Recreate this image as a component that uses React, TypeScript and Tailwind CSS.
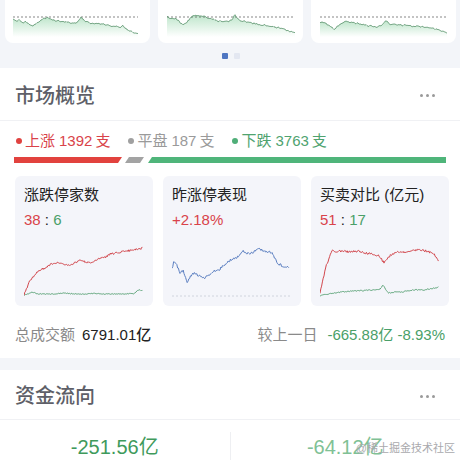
import React from "react";

type P = [number, number];

function rng(seed: number) {
  let s = seed;
  return () => {
    s |= 0;
    s = (s + 0x6d2b79f5) | 0;
    let t = Math.imul(s ^ (s >>> 15), 1 | s);
    t = (t + Math.imul(t ^ (t >>> 7), 61 | t)) ^ t;
    return ((t ^ (t >>> 14)) >>> 0) / 4294967296;
  };
}

function interp(keys: P[], x: number) {
  for (let i = 0; i < keys.length - 1; i++) {
    const [x0, y0] = keys[i];
    const [x1, y1] = keys[i + 1];
    if (x >= x0 && x <= x1) {
      const t = x1 === x0 ? 0 : (x - x0) / (x1 - x0);
      return y0 + (y1 - y0) * t;
    }
  }
  return keys[keys.length - 1][1];
}

function series(keys: P[], step: number, seed: number, amp: number): P[] {
  const r = rng(seed);
  const x0 = keys[0][0];
  const x1 = keys[keys.length - 1][0];
  const pts: P[] = [];
  for (let x = x0; x <= x1 + 0.001; x += step) {
    const y = interp(keys, x) + (r() - 0.5) * amp;
    pts.push([x, y]);
  }
  return pts;
}

function toPath(pts: P[]) {
  return pts.map((p, i) => `${i === 0 ? "M" : "L"}${p[0].toFixed(2)} ${p[1].toFixed(2)}`).join(" ");
}

function scaleKeys(keys: P[], xs: number, xe: number): P[] {
  return keys.map(([t, y]) => [xs + t * (xe - xs), y]);
}

const topCharts: { keys: P[]; xs: number; xe: number; seed: number }[] = [
  {
    keys: [
      [0, 19], [0.03, 21], [0.05, 20], [0.08, 23], [0.1, 21], [0.13, 25], [0.16, 26], [0.2, 22], [0.24, 19], [0.27, 17.5], [0.3, 19], [0.35, 21], [0.42, 22], [0.5, 23.5], [0.53, 20], [0.545, 17], [0.57, 21], [0.62, 23], [0.7, 24], [0.8, 26], [0.86, 27], [0.88, 26], [0.92, 30], [0.97, 33], [1, 33.5],
    ],
    xs: 8, xe: 133, seed: 11,
  },
  {
    keys: [
      [0, 17], [0.03, 19], [0.06, 18], [0.1, 22], [0.13, 25], [0.17, 20], [0.2, 16], [0.24, 15], [0.28, 16], [0.33, 18], [0.4, 21], [0.48, 22], [0.51, 19], [0.53, 15], [0.56, 20], [0.62, 22], [0.7, 24], [0.8, 26], [0.88, 28], [0.95, 31], [1, 33],
    ],
    xs: 9, xe: 137, seed: 23,
  },
  {
    keys: [
      [0, 22], [0.04, 23], [0.08, 26], [0.11, 29], [0.14, 26], [0.18, 23], [0.2, 21], [0.23, 22], [0.28, 23], [0.35, 25], [0.45, 27], [0.5, 24], [0.52, 20.5], [0.55, 24], [0.62, 25], [0.72, 26], [0.82, 27], [0.88, 28], [0.95, 31], [1, 33],
    ],
    xs: 9, xe: 136, seed: 37,
  },
];

function TopCard({ idx }: { idx: number }) {
  const c = topCharts[idx];
  const pts = series(scaleKeys(c.keys, c.xs, c.xe), 1, c.seed, 1.6);
  const line = toPath(pts);
  const area = `${line} L${c.xe} 37 L${c.xs} 37 Z`;
  const gid = `tg${idx}`;
  return (
    <div className="h-[43px] flex-1 rounded-b-lg bg-white">
      <svg width="145" height="43" viewBox="0 0 145 43">
        <defs>
          <linearGradient id={gid} x1="0" y1="0" x2="0" y2="1">
            <stop offset="0" stopColor="#5cbf7c" stopOpacity="0.4" />
            <stop offset="1" stopColor="#5cbf7c" stopOpacity="0" />
          </linearGradient>
        </defs>
        <path d={area} fill={`url(#${gid})`} />
        <line x1={c.xs} y1="17" x2={c.xe} y2="17" stroke="#555" strokeWidth="0.7" strokeDasharray="2 2" />
        <path d={line} fill="none" stroke="#6a9e7b" strokeWidth="0.9" />
      </svg>
    </div>
  );
}

function Dots() {
  return (
    <div className="flex gap-[3px]">
      <span className="h-[3px] w-[3px] rounded-full bg-[#9a9a9a]" />
      <span className="h-[3px] w-[3px] rounded-full bg-[#9a9a9a]" />
      <span className="h-[3px] w-[3px] rounded-full bg-[#9a9a9a]" />
    </div>
  );
}

function LegendItem({ color, dot, label, num }: { color: string; dot: string; label: string; num: string }) {
  return (
    <div className={`flex items-center ${color}`}>
      <span className={`mr-[3px] h-[6px] w-[6px] rounded-full ${dot}`} />
      <span>{label}</span>
      <span className="ml-[4px]">{num}</span>
      <span className="ml-[3px]">支</span>
    </div>
  );
}

const card1Red: P[] = [[0, 63], [3, 56], [5, 50], [7, 48], [10, 44], [12, 41], [16, 38], [21, 36], [26, 33], [30, 31], [36, 31], [44, 33], [51, 31], [56, 28], [62, 30], [66, 31], [71, 28], [76, 26], [82, 25], [86, 22], [93, 21], [101, 19], [110, 18], [119, 16]];
const card1Green: P[] = [[0, 63], [4, 62], [8, 60], [14, 62], [20, 62], [30, 62], [40, 61], [50, 62], [60, 62], [70, 61.5], [80, 62], [100, 62], [110, 61.5], [113, 59], [116, 58], [119, 59]];
const card2Blue: P[] = [[0, 37], [2, 29], [4, 31], [8, 41], [11, 38], [15, 50], [18, 45], [22, 41], [27, 44], [32, 46], [37, 43], [42, 39], [48, 37], [54, 31], [60, 27], [66, 25], [71, 19], [77, 22], [82, 20], [87, 17], [93, 19], [99, 20], [103, 26], [106, 32], [111, 34], [117, 35]];
const card3Red: P[] = [[0, 61], [3, 48], [6, 34], [9, 27], [12, 18], [16, 20], [22, 19], [30, 20], [38, 19], [45, 21], [52, 22], [59, 24], [62, 28], [64, 31], [68, 26], [72, 22], [78, 20], [85, 20], [92, 19], [99, 18], [106, 19], [112, 21], [116, 24], [119, 31]];
const card3Green: P[] = [[0, 64], [8, 62], [22, 60], [35, 59], [52, 58], [60, 57], [63, 53], [66, 58], [68, 61], [75, 60], [82, 60], [92, 58], [102, 58], [110, 57], [119, 55]];

function MiniChart({ lines, dashed }: { lines: { pts: P[]; color: string; seed: number; amp: number }[]; dashed?: number }) {
  return (
    <svg width="120" height="70" viewBox="0 0 120 70" className="mt-[2px]">
      {dashed !== undefined && (
        <line x1="0" y1={dashed} x2="119" y2={dashed} stroke="#c8ccd6" strokeWidth="0.8" strokeDasharray="2 2" />
      )}
      {lines.map((l, i) => (
        <path key={i} d={toPath(series(l.pts, 0.8, l.seed, l.amp))} fill="none" stroke={l.color} strokeWidth="1" strokeLinejoin="round" />
      ))}
    </svg>
  );
}

function StatCard({ title, value, children }: { title: string; value: React.ReactNode; children: React.ReactNode }) {
  return (
    <div className="flex h-[130px] flex-1 flex-col rounded-md bg-[#f4f5fa] px-[9px] pt-[9px]">
      <div className="text-[15px] leading-[20px] text-[#222]">{title}</div>
      <div className="mt-[5px] text-[15px] leading-[20px]">{value}</div>
      {children}
    </div>
  );
}

export default function App() {
  const red = "#d9434a";
  const green = "#4a9f68";
  return (
    <div className="relative h-[460px] w-[460px] overflow-hidden bg-[#f3f5f9] font-['Liberation_Sans','Noto_Sans_CJK_SC',sans-serif]">
      <div className="flex gap-2 px-[5px]">
        <TopCard idx={0} />
        <TopCard idx={1} />
        <TopCard idx={2} />
      </div>
      <div className="mt-[10px] flex justify-center gap-[6px] pl-[2px]">
        <span className="h-[6px] w-[6px] rounded-[1px] bg-[#4f76c2]" />
        <span className="h-[6px] w-[6px] rounded-[1px] bg-[#e3e7f1]" />
      </div>

      <div className="mt-[9px] bg-white pb-[13px]">
        <div className="flex h-[53px] items-center justify-between border-b border-[#f0f1f4] px-[15px] pt-[3px]">
          <div className="text-[20px] font-medium text-[#5e5f68]">市场概览</div>
          <div className="pr-[10px]"><Dots /></div>
        </div>
        <div className="px-[15px]">
          <div className="mt-[10px] flex h-[20px] items-center gap-[18px] pl-[1px] text-[15px]">
            <LegendItem color="text-[#d9434a]" dot="bg-[#e0423f]" label="上涨" num="1392" />
            <LegendItem color="text-[#9a9a9a]" dot="bg-[#a0a0a0]" label="平盘" num="187" />
            <LegendItem color="text-[#4fa36f]" dot="bg-[#4fae78]" label="下跌" num="3763" />
          </div>
          <svg width="432" height="6" viewBox="0 0 432 6" className="mt-[6px] -ml-[1px]">
            <polygon points="0,0 108,0 104,6 0,6" fill="#e2423e" />
            <polygon points="115,0 130,0 126,6 111,6" fill="#a3a3a3" />
            <polygon points="138,0 432,0 432,6 134,6" fill="#4fb57a" />
          </svg>
          <div className="mt-[13px] flex gap-[10px]">
            <StatCard
              title="涨跌停家数"
              value={
                <span>
                  <span style={{ color: red }}>38</span>
                  <span className="text-[#222]"> : </span>
                  <span style={{ color: green }}>6</span>
                </span>
              }
            >
              <MiniChart
                lines={[
                  { pts: card1Green, color: "#5fa57a", seed: 5, amp: 0.8 },
                  { pts: card1Red, color: "#d2474d", seed: 3, amp: 2 },
                ]}
              />
            </StatCard>
            <StatCard title="昨涨停表现" value={<span style={{ color: red }}>+2.18%</span>}>
              <MiniChart dashed={64} lines={[{ pts: card2Blue, color: "#5b7fc1", seed: 9, amp: 2.4 }]} />
            </StatCard>
            <StatCard
              title="买卖对比 (亿元)"
              value={
                <span>
                  <span style={{ color: red }}>51</span>
                  <span className="text-[#222]"> : </span>
                  <span style={{ color: green }}>17</span>
                </span>
              }
            >
              <MiniChart
                lines={[
                  { pts: card3Green, color: "#5fa57a", seed: 13, amp: 1 },
                  { pts: card3Red, color: "#d2474d", seed: 17, amp: 2.2 },
                ]}
              />
            </StatCard>
          </div>
          <div className="mt-[19px] flex h-[20px] items-center justify-between text-[15px]">
            <div className="flex items-center">
              <span className="text-[#8a8a8a]">总成交额</span>
              <span className="ml-[7px] font-medium text-[#222]">6791.01亿</span>
            </div>
            <div className="flex items-center">
              <span className="text-[#8a8a8a]">较上一日</span>
              <span className="ml-[10px] text-[#4a9f68]">-665.88亿 -8.93%</span>
            </div>
          </div>
        </div>
      </div>

      <div className="mt-[12px] bg-white">
        <div className="flex h-[50px] items-center justify-between border-b border-[#f0f1f4] px-[15px] pt-[3px]">
          <div className="text-[20px] font-medium text-[#5e5f68]">资金流向</div>
          <div className="pr-[10px]"><Dots /></div>
        </div>
        <div className="flex h-[60px] pt-[12px]">
          <div className="flex flex-1 justify-center text-[20px] leading-[30px] text-[#3f9a5c]">-251.56亿</div>
          <div className="h-[40px] w-px bg-[#eeeff2]" />
          <div className="flex flex-1 justify-center text-[20px] leading-[30px] text-[#80c195]">-64.12亿</div>
        </div>
      </div>

      <div className="absolute right-[5px] top-[440px] text-[11px] leading-[16px] text-[#a9a9ad]">@稀土掘金技术社区</div>
    </div>
  );
}
